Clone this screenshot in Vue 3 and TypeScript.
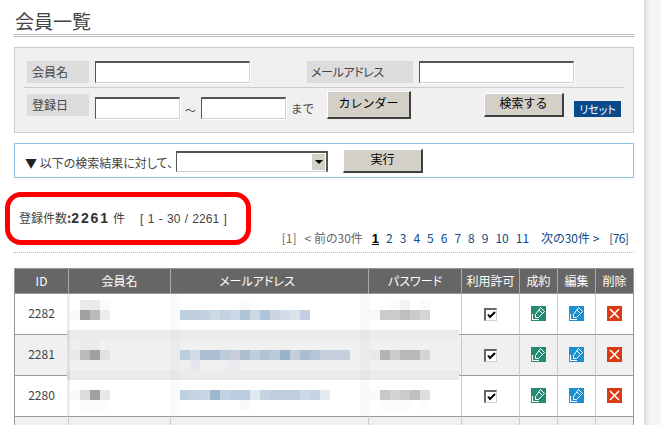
<script setup lang="ts">
interface Block { x: number; y: number; c: string }
interface Row { id: string; alt: boolean }

const rows: Row[] = [
  { id: '2282', alt: false },
  { id: '2281', alt: true },
  { id: '2280', alt: false },
  { id: '', alt: true }
]

const heads = ['ID', '会員名', 'メールアドレス', 'パスワード', '利用許可', '成約', '編集', '削除']
const pages = [2, 3, 4, 5, 6, 7, 8, 9, 10, 11]

const strips: Array<[number, number, string]> = [
  [180, 310, '#bfd0e2 #bfd0e2 #c2d0e2 #ccdae6 #c2d2e2 #ccd8e6 #b0c4d8 #ccd8e4 #b0c4da #cad6e4 #d2dce8 #dae3ea #c0d0e0'],
  [180, 350, '#bccede #d2dbe2 #aabfd4 #aabfd4 #bccbdb #c8cedc #adc0d2 #bfcedc #b0c2d4 #bccbd9 #9ab3cc #c5cedb #aabed2 #b6c6d8 #c6d0dc #c6d0dc #c6d0dc'],
  [180, 360, '#eeeeee #e4e8ee #efefef #efefef #eeeeee #e8ecf0'],
  [180, 390, '#bfd0e2 #c4d2e2 #c8d6e4 #9fb6d0 #c2d2e0 #bccce0 #bccce0 #e0e8f0 #c4d2e2 #bfcfe0 #bfcfe0 #bfcfe0 #ccd8e4 #c4d2e2 #e4eaf4'],
  [240, 300, '#f8fafc'],
  [240, 400, '#f8fafc'],
  [80, 300, '#ebebeb #ebebeb #fafafa'],
  [70, 310, '#fafafa #a0a0a0 #bbbbbb #ececec'],
  [70, 340, '#eeeeee #ebebeb #ebebeb'],
  [70, 350, '#e9e9e9 #bbbbbb #a0a0a0 #e2e2e2'],
  [70, 390, '#fafafa #dddddd #a0a0a0 #e8e8e8'],
  [80, 400, '#fcfcfc #fcfcfc #fcfcfc'],
  [390, 300, '#fbfbfb #f2f2f2 #ffffff #fafafa'],
  [370, 310, '#f8f8f8 #cbcbcb #cbcbcb #bfbfbf #cbcbcb #d4d4d4'],
  [370, 350, '#e8e8e8 #b4b4b4 #cbcbcb #b8b8b8 #b8b8b8 #d4d4d4'],
  [370, 390, '#fafafa #c8c8c8 #d4d4d4 #cbcbcb #c0c0c0 #dddddd'],
  [380, 400, '#fcfcfc #fcfcfc #fcfcfc #ffffff #fcfcfc']
]

const blocks: Block[] = strips.flatMap(([x, y, list]) =>
  list.split(' ').map((c, i) => ({ x: x + i * 10 - 67, y: y - 294, c }))
)

const blockStyle = (b: Block) => ({ left: `${b.x}px`, top: `${b.y}px`, background: b.c })
</script>

<template>
  <div class="page">
    <main class="panel">
      <h1 class="title">会員一覧</h1>

      <form class="search" @submit.prevent>
        <div class="search-row first">
          <span class="label name">会員名</span>
          <input class="field wide" type="text" />
          <span class="label mail">メールアドレス</span>
          <input class="field wide" type="text" />
        </div>
        <div class="search-row second">
          <span class="label name date">登録日</span>
          <input class="field short" type="text" />
          <span class="tilde">～</span>
          <input class="field short" type="text" />
          <span class="until">まで</span>
          <button class="btn calendar" type="button">カレンダー</button>
          <button class="btn find" type="submit">検索する</button>
          <a class="reset">リセット</a>
        </div>
      </form>

      <div class="action">
        <span class="action-text"><span class="tri">▼</span> 以下の検索結果に対して、</span>
        <span class="select">
          <select class="select-native"><option></option></select>
          <span class="select-arrow"></span>
        </span>
        <button class="btn run" type="button">実行</button>
      </div>

      <section class="result">
        <div class="count">
          <span>登録件数<b class="colon">:</b></span><b class="num">2261</b><span>件</span>
          <span class="range">[ 1 - 30 / 2261 ]</span>
        </div>
        <nav class="pager">
          <span class="muted first-link">[1]</span>
          <span class="muted prev">&lt; 前の30件</span>
          <b class="current">1</b>
          <a v-for="p in pages" :key="p" class="pg">{{ p }}</a>
          <a class="pg next">次の30件 &gt;</a>
          <a class="pg last">[76]</a>
        </nav>
        <div class="highlight"></div>
      </section>

      <div class="table-wrap">
        <table class="members">
          <colgroup>
            <col class="c-id" /><col class="c-name" /><col class="c-mail" /><col class="c-pass" />
            <col class="c-ok" /><col class="c-act" /><col class="c-act" /><col class="c-del" />
          </colgroup>
          <thead>
            <tr><th v-for="h in heads" :key="h">{{ h }}</th></tr>
          </thead>
          <tbody>
            <tr v-for="(r, i) in rows" :key="i" :class="{ alt: r.alt }">
              <td class="id-cell">{{ r.id }}</td>
              <td></td>
              <td></td>
              <td></td>
              <td>
                <span class="check">
                  <svg width="9" height="9" viewBox="0 0 9 9"><path d="M1 4.5 3 7l5-5" fill="none" stroke="#000" stroke-width="2" /></svg>
                </span>
              </td>
              <td>
                <span class="ico green">
                  <svg width="15" height="15" viewBox="0 0 15 15" fill="none" stroke="#fff">
                    <path d="M9.5 1.5 13.5 5.5 7.5 11.5H4.5V8.5L9.5 1.5Z" />
                    <path d="M8 4 11.5 7.5" />
                    <path d="M1.5 8V13.5H8" stroke-width="1.2" />
                  </svg>
                </span>
              </td>
              <td>
                <span class="ico blue">
                  <svg width="15" height="15" viewBox="0 0 15 15" fill="none" stroke="#fff">
                    <path d="M9.5 1.5 13.5 5.5 7.5 11.5H4.5V8.5L9.5 1.5Z" />
                    <path d="M8 4 11.5 7.5" />
                    <path d="M1.5 8V13.5H8" stroke-width="1.2" />
                  </svg>
                </span>
              </td>
              <td>
                <span class="ico red">
                  <svg width="15" height="15" viewBox="0 0 15 15" fill="none" stroke="#fff" stroke-width="1.6">
                    <path d="M3 3 12 12M12 3 3 12" />
                  </svg>
                </span>
              </td>
            </tr>
          </tbody>
        </table>

        <div class="mosaic">
          <div class="smear"><div class="smear-in"></div></div>
          <div class="vstrip s1"></div>
          <div class="vstrip s2"></div>
          <div class="vstrip s3"></div>
          <div v-for="(b, i) in blocks" :key="i" class="blk" :style="blockStyle(b)"></div>
        </div>
      </div>
    </main>
    <div class="edge"></div>
  </div>
</template>

<style>
html, body { margin: 0; padding: 0; background: #f5f5f5; }
</style>

<style scoped>
.page {
  display: flex;
  width: 661px;
  height: 425px;
  overflow: hidden;
  background: #f5f5f5;
  font-family: "Noto Sans CJK JP", "Noto Sans", sans-serif;
  font-size: 12px;
  color: #444;
  font-feature-settings: "palt";
}
.panel {
  flex: none;
  box-sizing: border-box;
  width: 644px;
  padding: 0 10px 0 14px;
  background: #fff;
}
.edge {
  flex: none;
  width: 6px;
  background: linear-gradient(to right, #dcdcdc, #f5f5f5);
}
.title {
  box-sizing: border-box;
  height: 37px;
  margin: 0;
  padding-left: 1px;
  border-bottom: 3px double #bbb;
  font-size: 19px;
  font-weight: 400;
  line-height: 42px;
  color: #444;
  font-feature-settings: normal;
}

/* search */
.search {
  box-sizing: border-box;
  height: 86px;
  margin-top: 10px;
  border: 1px solid #ccc;
  background: #f0f0f0;
}
.search-row {
  display: flex;
  align-items: flex-start;
  margin: 0 9px;
  padding-left: 3px;
}
.first {
  height: 26px;
  padding-top: 13px;
  border-bottom: 1px solid #ccc;
}
.second { padding-top: 3px; }
.label {
  box-sizing: border-box;
  height: 22px;
  background: #ddd;
  line-height: 22px;
}
.name {
  width: 62px;
  margin-right: 6px;
  padding-left: 5px;
  font-feature-settings: normal;
}
.date { margin-top: 3px; }
.mail {
  width: 106px;
  margin: 0 6px 0 57px;
  padding-left: 4px;
  letter-spacing: -0.4px;
}
.field {
  box-sizing: border-box;
  height: 22px;
  padding: 0 2px;
  border-style: solid;
  border-width: 2px 1px 1px 1px;
  border-color: #555 #d4d0c8 #d4d0c8 #555;
  background: #fff;
  outline: 0;
  box-shadow: 1px 1px 0 #fff;
}
.wide { width: 155px; }
.short { width: 85px; margin-top: 6px; }
.tilde {
  width: 21px;
  margin-top: 11px;
  text-align: center;
  font-size: 11px;
}
.until {
  width: 41px;
  margin-top: 9px;
  padding-left: 5px;
  box-sizing: border-box;
  font-feature-settings: normal;
  font-size: 11.5px;
}
.btn {
  box-sizing: border-box;
  padding: 0 0 3px;
  border-style: solid;
  border-width: 1px 2px 2px 1px;
  border-color: #fff #404040 #404040 #fff;
  background: #d4d0c8;
  color: #000;
  font-family: inherit;
  font-size: 12px;
  line-height: 1;
}
.calendar { width: 84px; height: 28px; }
.find { width: 80px; height: 24px; margin: 2px 0 0 73px; font-feature-settings: normal; }
.reset {
  box-sizing: border-box;
  width: 47px;
  height: 16px;
  margin: 10px 0 0 10px;
  background: #0a4a8a;
  color: #fff;
  font-size: 11px;
  line-height: 16px;
  text-align: center;
}

/* action */
.action {
  box-sizing: border-box;
  display: flex;
  align-items: flex-start;
  height: 35px;
  margin-top: 10px;
  padding: 5px 0 0 10px;
  border: 1px solid #8cc4e4;
}
.action-text {
  width: 151px;
  margin-top: 6px;
  line-height: 16px;
  white-space: nowrap;
}
.tri { color: #222; }
.select {
  box-sizing: border-box;
  display: flex;
  width: 152px;
  height: 21px;
  margin-top: 2px;
  border-style: solid;
  border-width: 2px 2px 1px 1px;
  border-color: #555 #555 #d4d0c8 #555;
  background: #fff;
}
.select-native {
  flex: 1;
  min-width: 0;
  padding: 0;
  border: 0;
  outline: 0;
  background: #fff;
  appearance: none;
}
.select-arrow {
  position: relative;
  flex: none;
  width: 15px;
  box-sizing: border-box;
  border: 1px solid #fff;
  background: #d4d0c8;
}
.select-arrow::after {
  content: "";
  position: absolute;
  left: 3px;
  top: 6px;
  border-style: solid;
  border-width: 4px 4px 0;
  border-color: #000 transparent transparent;
}
.run { width: 80px; height: 24px; margin-left: 15px; }

/* result */
.result {
  position: relative;
  box-sizing: border-box;
  height: 75px;
  border-bottom: 1px dotted #bbb;
}
.count {
  display: flex;
  align-items: baseline;
  position: absolute;
  left: 5px;
  top: 30px;
  line-height: 20px;
  white-space: nowrap;
}
.colon { font-size: 13px; }
.num {
  margin: 0 3px 0 0;
  color: #333;
  font-family: "Liberation Sans", sans-serif;
  font-size: 14px;
  letter-spacing: 1.9px;
}
.range {
  margin-left: 15px;
  word-spacing: 1px;
  font-family: "Liberation Sans", sans-serif;
}
.pager {
  display: flex;
  align-items: baseline;
  justify-content: flex-end;
  box-sizing: border-box;
  height: 74px;
  padding: 51px 6px 0 0;
  line-height: 18px;
  white-space: nowrap;
}
.muted { color: #666; }
.prev { margin-left: 8px; }
.current {
  margin-left: 9px;
  color: #000;
  font-family: "Liberation Sans", sans-serif;
  font-size: 13px;
  text-decoration: underline;
}
.pg {
  margin-left: 7px;
  color: #0a4a8a;
}
.next { margin-left: 12px; }
.last { margin-left: 10px; letter-spacing: -0.7px; }
.highlight {
  position: absolute;
  left: -9px;
  top: 14px;
  box-sizing: border-box;
  width: 246px;
  height: 53px;
  border: 5px solid #f00;
  border-radius: 16px;
}

/* table */
.table-wrap {
  position: relative;
  margin-top: 15px;
}
.members {
  width: 620px;
  table-layout: fixed;
  border-collapse: separate;
  border-spacing: 0;
  border-top: 1px solid #999;
  border-left: 1px solid #999;
}
.c-id { width: 54px; }
.c-name { width: 102px; }
.c-mail { width: 198px; }
.c-pass { width: 93px; }
.c-ok { width: 58px; }
.c-act { width: 38px; }
.c-del { width: 38px; }
.members th {
  box-sizing: border-box;
  height: 25px;
  padding: 0;
  border-right: 1px solid #aaa;
  border-bottom: 1px solid #999;
  background: #666;
  color: #fff;
  font-weight: 400;
  line-height: 24px;
  text-align: center;
}
.members th:nth-child(3) { padding-right: 25px; }
.members th:last-child, .members td:last-child { border-right-color: #999; }
.members td {
  box-sizing: border-box;
  height: 41px;
  padding: 0 0 2px;
  border-right: 1px solid #ccc;
  border-bottom: 1px solid #999;
  text-align: center;
  vertical-align: middle;
  line-height: 1;
}
.members tr.alt td { background: #f0f0f0; }
.check {
  box-sizing: border-box;
  display: inline-flex;
  align-items: center;
  justify-content: center;
  width: 13px;
  height: 13px;
  margin-top: 2px;
  vertical-align: top;
  border-style: solid;
  border-width: 2px 1px 1px 2px;
  border-color: #666 #d4d0c8 #d4d0c8 #666;
  background: #fff;
}
.ico {
  display: inline-block;
  width: 15px;
  height: 15px;
  vertical-align: top;
}
.ico svg { display: block; }
.green { background: #228b72; }
.blue { background: #1a90d0; }
.red { background: #dc3a14; }

/* blurred-out personal data */
.mosaic {
  position: absolute;
  left: 53px;
  top: 26px;
  width: 392px;
  height: 122px;
  overflow: hidden;
  background: #fff;
}
.smear {
  position: absolute;
  left: 0;
  right: 0;
  top: 36px;
  height: 50px;
  padding: 10px 0;
  box-sizing: border-box;
  background: #ebebeb;
}
.smear-in { height: 30px; background: #f0f0f0; }
.vstrip {
  position: absolute;
  top: 0;
  bottom: 0;
  background: rgba(0, 0, 0, 0.018);
}
.s1 { left: 0; width: 3px; background: rgba(0, 0, 0, 0.07); }
.s2 { left: 103px; width: 10px; }
.s3 { left: 293px; width: 10px; }
.blk {
  position: absolute;
  width: 10px;
  height: 10px;
}
</style>
